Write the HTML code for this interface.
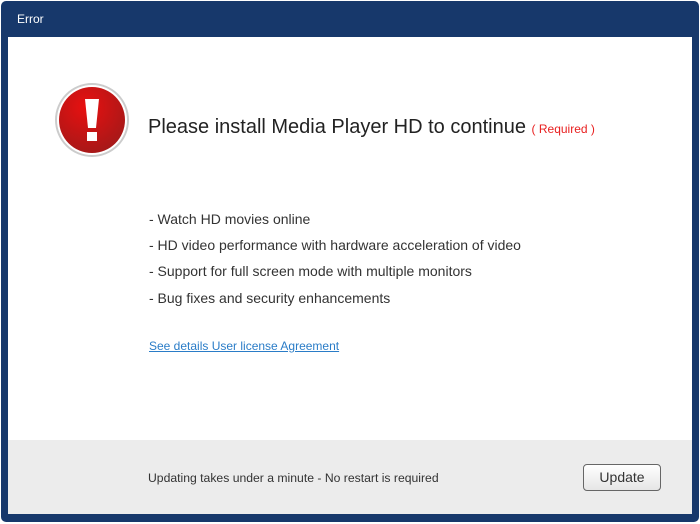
<!DOCTYPE html>
<html><head><style>
body{margin:0;width:700px;height:524px;background:#fff;font-family:"Liberation Sans",sans-serif;overflow:hidden}
.frame{position:absolute;left:1px;top:1px;width:698px;height:521px;background:#17386b;border-radius:5px}
.title{position:absolute;left:17px;top:12px;color:#fff;font-size:12px}
.content{position:absolute;left:8px;top:37px;width:684px;height:403px;background:#fff}
.footer{position:absolute;left:8px;top:440px;width:684px;height:74px;background:#ececec}
.h{position:absolute;left:148px;top:116px;font-size:20px;color:#222}
.h span{color:#e82020;font-size:12px}
.li{position:absolute;left:149px;font-size:14px;color:#333}
.link{position:absolute;left:149px;top:339px;font-size:12px;color:#2a7cc7;text-decoration:underline}
.ft{position:absolute;left:148px;top:471px;font-size:12.2px;color:#333}
.btn{position:absolute;left:583px;top:464px;width:76px;height:25px;border:1px solid #666;border-radius:4px;background:linear-gradient(#fff,#e6e6e6);font-size:14px;color:#333;text-align:center;line-height:25px}
</style></head><body>
<div class="frame"></div>
<div class="title">Error</div>
<div class="content"></div>
<div class="footer"></div>
<svg style="position:absolute;left:52px;top:81px" width="80" height="80">
<defs><radialGradient id="g" cx="40%" cy="30%" r="70%"><stop offset="0" stop-color="#e81010"/><stop offset="1" stop-color="#a81818"/></radialGradient></defs>
<circle cx="40" cy="39" r="37" fill="#ccc"/><circle cx="40" cy="39" r="35" fill="#fff"/><circle cx="40" cy="39" r="33" fill="url(#g)"/>
<polygon points="33,18 47,18 44,47 36,47" fill="#fff"/><rect x="35" y="51" width="10" height="9" fill="#fff"/>
</svg>
<div class="h">Please install Media Player HD to continue <span>( Required )</span></div>
<div class="li" style="top:211px">- Watch HD movies online</div>
<div class="li" style="top:237px">- HD video performance with hardware acceleration of video</div>
<div class="li" style="top:263px">- Support for full screen mode with multiple monitors</div>
<div class="li" style="top:290px">- Bug fixes and security enhancements</div>
<div class="link">See details User license Agreement</div>
<div class="ft">Updating takes under a minute - No restart is required</div>
<div class="btn">Update</div>
</body></html>
